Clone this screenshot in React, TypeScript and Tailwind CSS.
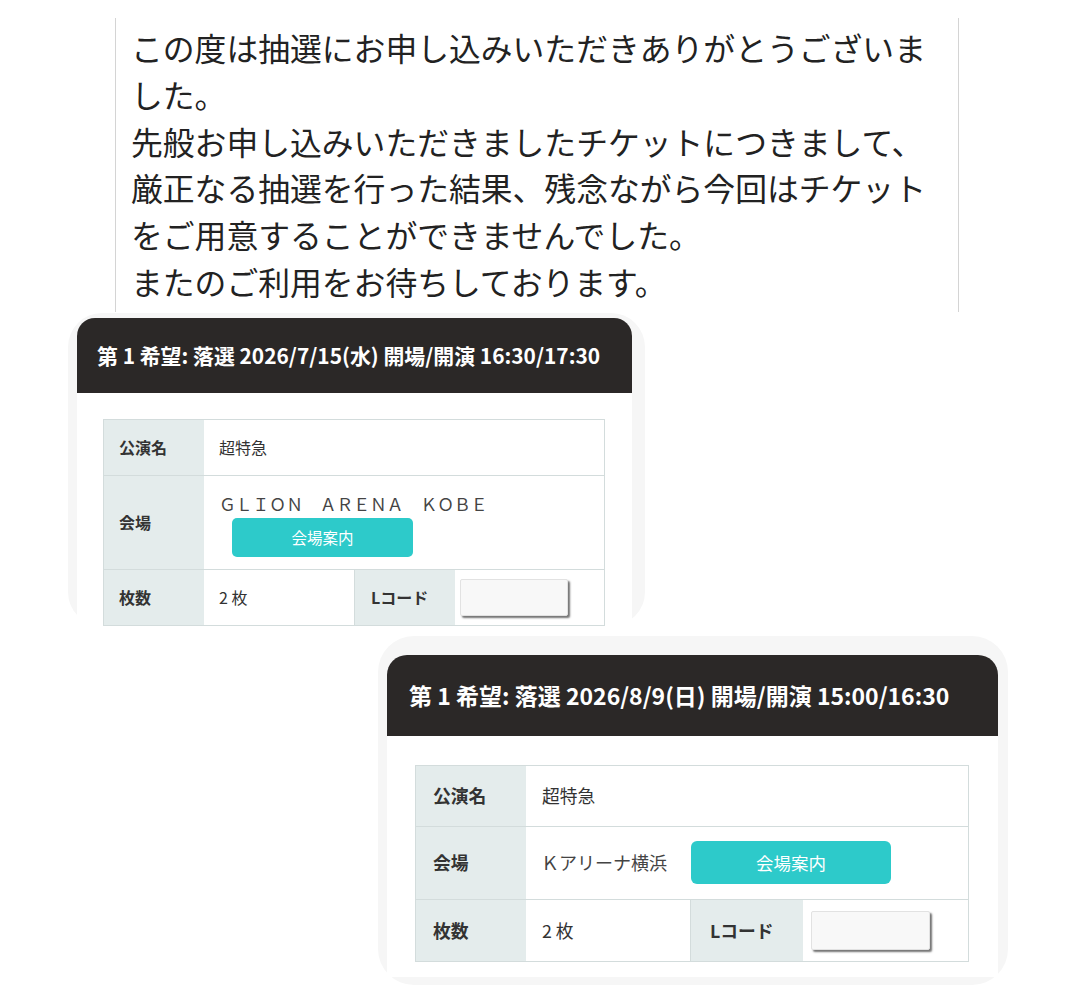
import * as React from "react";

const lines = [
  "この度は抽選にお申し込みいただきありがとうございま",
  "した。",
  "先般お申し込みいただきましたチケットにつきまして、",
  "厳正なる抽選を行った結果、残念ながら今回はチケット",
  "をご用意することができませんでした。",
  "またのご利用をお待ちしております。",
];

// 左上のカード（小さめ）
function SmallCard() {
  return (
    <div className="ml-[68px] mt-[1px] w-[577px] rounded-[34px] bg-[#f6f6f6] pl-[9px] pr-[13px] pt-[5px]">
      <div className="flex h-[75px] items-center rounded-t-[18px] bg-[#2b2827] pl-[20px] text-[20.9px] font-bold text-white">
        第 1 希望: 落選 2026/7/15(水) 開場/開演 16:30/17:30
      </div>
      <div className="bg-white pl-[26px] pr-[27px] pt-[26px]">
        <div className="border border-[#d3dcdc] text-[16px] text-[#333]">
          <div className="flex h-[56px] border-b border-[#d3dcdc]">
            <div className="flex w-[100px] items-center bg-[#e4ecec] pl-[15px] font-bold">公演名</div>
            <div className="flex items-center pl-[15px]">超特急</div>
          </div>
          <div className="flex h-[94px] border-b border-[#d3dcdc]">
            <div className="flex w-[100px] items-center bg-[#e4ecec] pl-[15px] font-bold">会場</div>
            <div className="flex flex-col items-start pl-[15px] pt-[16px]">
              <div className="text-[16.8px] leading-[24px] text-[#444]">ＧＬＩＯＮ　ＡＲＥＮＡ　ＫＯＢＥ</div>
              <div className="ml-[13px] mt-[2px] flex h-[39px] w-[181px] items-center justify-center rounded-[5px] bg-[#2dcaca] text-[15.5px] text-white">
                会場案内
              </div>
            </div>
          </div>
          <div className="flex h-[55px]">
            <div className="flex w-[100px] items-center bg-[#e4ecec] pl-[15px] font-bold">枚数</div>
            <div className="flex w-[151px] items-center border-r border-[#d3dcdc] pl-[15px]">2 枚</div>
            <div className="flex w-[100px] items-center bg-[#e4ecec] pl-[16px] font-bold">Lコード</div>
            <div className="flex flex-1 items-center pl-[5px]">
              <div className="h-[37px] w-[108px] rounded-[2px] border border-[#e2e2e2] bg-[#f8f8f8] shadow-[2px_2px_2px_rgba(0,0,0,0.55)]" />
            </div>
          </div>
        </div>
      </div>
    </div>
  );
}

// 右下のカード（大きめ）
function LargeCard() {
  return (
    <div className="ml-[378px] mt-[10px] w-[630px] rounded-[36px] bg-[#f6f6f6] pb-[8px] pl-[9px] pr-[10px] pt-[19px]">
      <div className="flex h-[81px] items-center rounded-t-[20px] bg-[#2b2827] pl-[22px] text-[23px] font-bold text-white">
        第 1 希望: 落選 2026/8/9(日) 開場/開演 15:00/16:30
      </div>
      <div className="bg-white pb-[15px] pl-[28px] pr-[29px] pt-[29px]">
        <div className="border border-[#d3dcdc] text-[17.8px] text-[#333]">
          <div className="flex h-[61px] border-b border-[#d3dcdc]">
            <div className="flex w-[110px] items-center bg-[#e4ecec] pl-[17px] font-bold">公演名</div>
            <div className="flex items-center pl-[16px]">超特急</div>
          </div>
          <div className="flex h-[73px] border-b border-[#d3dcdc]">
            <div className="flex w-[110px] items-center bg-[#e4ecec] pl-[17px] font-bold">会場</div>
            <div className="flex items-center pl-[15px]">
              <div className="text-[18px] text-[#444]">Ｋアリーナ横浜</div>
              <div className="ml-[24px] flex h-[43px] w-[200px] items-center justify-center rounded-[6px] bg-[#2dcaca] text-[17.5px] text-white">
                会場案内
              </div>
            </div>
          </div>
          <div className="flex h-[61px]">
            <div className="flex w-[110px] items-center bg-[#e4ecec] pl-[17px] font-bold">枚数</div>
            <div className="flex w-[165px] items-center border-r border-[#d3dcdc] pl-[16px]">2 枚</div>
            <div className="flex w-[112px] items-center bg-[#e4ecec] pl-[19px] font-bold">Lコード</div>
            <div className="flex flex-1 items-center pl-[8px]">
              <div className="h-[39px] w-[119px] rounded-[2px] border border-[#e2e2e2] bg-[#f8f8f8] shadow-[2px_2px_2px_rgba(0,0,0,0.55)]" />
            </div>
          </div>
        </div>
      </div>
    </div>
  );
}

export default function App() {
  return (
    <div className="min-h-[986px] bg-white pt-[18px] font-['Noto_Sans_CJK_JP','Noto_Sans',sans-serif] text-[#222]">
      <div className="ml-[115px] w-[844px] border-x border-[#d4d4d4] pb-[7px] pl-[15px] pt-[6px] text-[31.8px] leading-[46.8px]">
        {lines.map((l, i) => (
          <div key={i} className="whitespace-nowrap">
            {l}
          </div>
        ))}
      </div>
      <SmallCard />
      <LargeCard />
    </div>
  );
}
